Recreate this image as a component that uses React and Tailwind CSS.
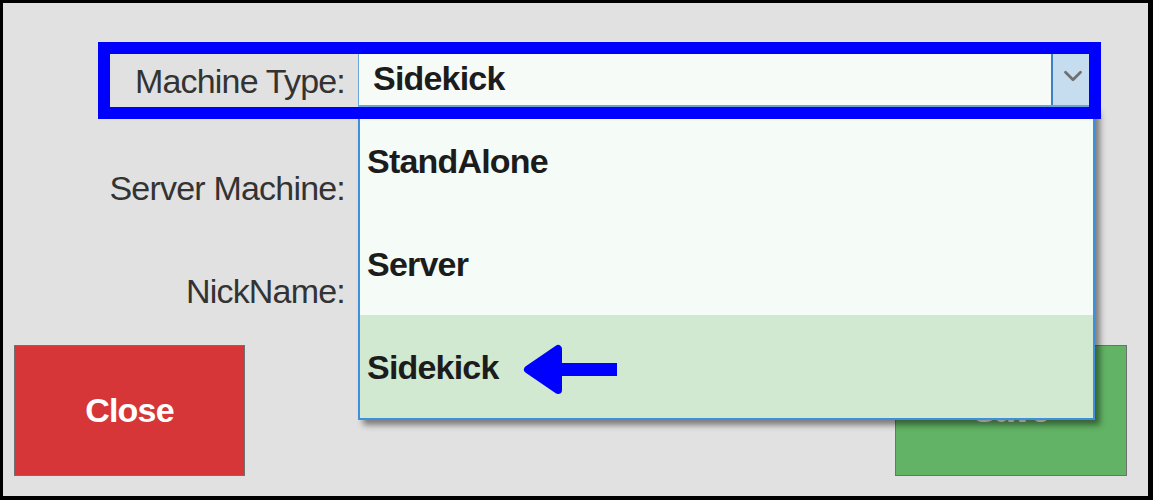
import { ChevronDown } from 'lucide-react'

const OPTIONS = ['StandAlone', 'Server', 'Sidekick']

function ArrowMark() {
  return (
    <svg width="100" height="60" viewBox="0 0 100 60" className="absolute left-[517px] top-[337px]">
      <polygon points="8,29.5 38,9 38,50" fill="#0000ff" stroke="#0000ff" strokeWidth="8" strokeLinejoin="round" />
      <rect x="40" y="23" width="57" height="13" fill="#0000ff" />
    </svg>
  )
}

export default function App() {
  const selected = 'Sidekick'

  return (
    <div
      className="relative w-[1153px] h-[500px] overflow-hidden bg-[#e1e1e1] border-black border-t-[3px] border-l-[3px] border-r-[5px] border-b-[4px] text-[34px] tracking-[-0.8px]"
      style={{ fontFamily: '"Liberation Sans", Arial, sans-serif' }}
    >
      <div className="flex flex-col">
        {/* machine type row */}
        <div className="flex h-[57px] mt-[47px]">
          <div className="w-[342px] mr-[13px] pt-[14px] text-right leading-[34px] text-[#333]">Machine Type:</div>
          <div className="flex w-[734px] bg-[#f7fbf8] border-l border-b-2 border-[#6aa6da]">
            <div className="flex-1 pl-[14px] pt-[11px] leading-[34px] font-bold text-[#1c1c1c]">{selected}</div>
            <div className="flex w-[41px] items-center justify-center bg-[#c6ddf0] border-l-2 border-[#3c82bd]">
              <ChevronDown size={30} strokeWidth={2.2} className="text-[#707070] -mt-[4px]" />
            </div>
          </div>
        </div>

        <div className="w-[342px] mt-[64px] text-right leading-[34px] text-[#333]">Server Machine:</div>
        <div className="w-[342px] mt-[69px] text-right leading-[34px] text-[#333]">NickName:</div>

        {/* buttons */}
        <div className="flex justify-between pl-[11px] pr-[21px] mt-[37px]">
          <button className="flex w-[231px] h-[131px] items-center justify-center bg-[#d63638] border border-[#707070] font-bold text-white">
            Close
          </button>
          <button className="flex w-[232px] h-[131px] items-center justify-center bg-[#62b365] border border-[#707070] font-bold text-white">
            Save
          </button>
        </div>
      </div>

      {/* open dropdown list */}
      <div className="absolute left-[355px] top-[104px] w-[737px] bg-[#f5fbf7] border-2 border-[#3f90da] shadow-[5px_5px_6px_rgba(0,0,0,0.45)]">
        {OPTIONS.map(opt => (
          <div
            key={opt}
            className={`flex h-[103px] items-center pl-[7px] font-bold leading-[34px] text-[#1c1c1c] ${opt === selected ? 'bg-[#d1e8d1]' : ''}`}
          >
            {opt}
          </div>
        ))}
      </div>

      {/* annotation */}
      <div className="absolute left-[95px] top-[39px] w-[1003px] h-[77px] border-[12px] border-[#0000ff]" />
      <ArrowMark />
    </div>
  )
}
